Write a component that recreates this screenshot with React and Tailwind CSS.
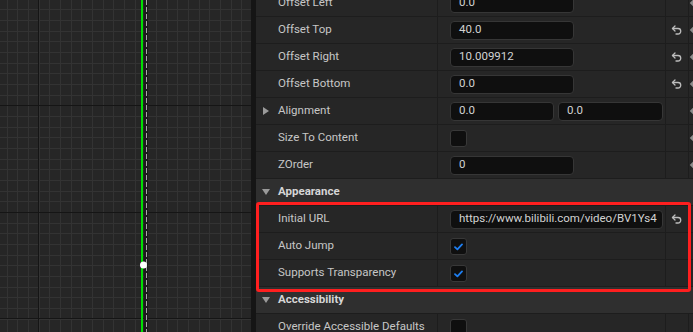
import React from 'react';

const font = { fontFamily: 'Roboto, "Noto Sans", sans-serif' };

// viewport grid lines, snapped to whole pixels
const minorX = [];
const minorY = [];
for (let i = 0; i < 30; i++) {
  minorX.push(Math.round(6.67 + i * 10.667));
  minorY.push(Math.round(9.33 + i * 10.667));
}
const majorX = [38, 145];
const majorY = [105, 212, 318];

const Viewport = () => (
  <div className="w-[251px] h-full shrink-0 bg-[#262626]">
    <svg width="251" height="332" className="block">
      {minorX.map((x) => (
        <rect key={'vx' + x} x={x} y="0" width="1" height="332" fill="#333333" />
      ))}
      {minorY.map((y) => (
        <rect key={'hy' + y} x="0" y={y} width="251" height="1" fill="#333333" />
      ))}
      {majorX.map((x) => (
        <rect key={'mx' + x} x={x} y="0" width="1" height="332" fill="#151515" />
      ))}
      {majorY.map((y) => (
        <rect key={'my' + y} x="0" y={y} width="251" height="1" fill="#151515" />
      ))}
      <rect x="144" y="0" width="4" height="332" fill="#1b1b1b" />
      <line x1="146.5" y1="0" x2="146.5" y2="332" stroke="#a8a8a8" strokeWidth="1" strokeDasharray="5 2" />
      <rect x="141" y="0" width="2" height="332" fill="#00e000" />
      <circle cx="143.5" cy="265" r="3.5" fill="#ffffff" />
    </svg>
  </div>
);

const ResetIcon = () => (
  <svg width="12" height="11" viewBox="0 0 24 22" fill="none" stroke="#bdbdbd" strokeWidth="2.6" strokeLinecap="round" strokeLinejoin="round">
    <path d="M8 12 3 7l5-5" />
    <path d="M3 7h11a5.5 5.5 0 0 1 0 11H10" />
  </svg>
);

const Check = ({ checked }) => (
  <div className="w-[17px] h-[17px] rounded-[3px] bg-[#0f0f0f] border border-[#383838] flex items-center justify-center">
    {checked && (
      <svg width="9" height="8" viewBox="0 0 9 8" className="mt-[1px]">
        <path d="M1 4.2 3.4 6.4 8 1.4" fill="none" stroke="#1e7ef0" strokeWidth="1.8" strokeLinecap="round" strokeLinejoin="round" />
      </svg>
    )}
  </div>
);

const Input = ({ value, w = 'w-[124px]' }) => (
  <div className={`${w} h-[19px] rounded-[4px] bg-[#0f0f0f] border border-[#363636] pl-2 flex items-center overflow-hidden whitespace-nowrap text-[11.5px] text-[#d2d2d2]`}>
    {value}
  </div>
);

const Row = ({ label, arrow, reset, key_, children }) => (
  <div className="flex h-[27px] border-b border-[#1d1d1d] bg-[#262626]">
    <div className="w-[182px] shrink-0 border-r border-[#1d1d1d] flex items-center relative pl-[22px]">
      {arrow && (
        <span className="absolute left-[7px] top-1/2 -translate-y-1/2 w-0 h-0 border-y-[4.5px] border-y-transparent border-l-[6px] border-l-[#9a9a9a]"></span>
      )}
      <span className="text-[11.5px] text-[#c6c6c6] whitespace-nowrap">{label}</span>
    </div>
    <div className="w-[228px] shrink-0 border-r border-[#1d1d1d] flex items-center pl-[12px] gap-[4px]">
      {children}
    </div>
    <div className="w-[23px] shrink-0 border-r border-[#1d1d1d] flex items-center justify-center">
      {reset && <ResetIcon />}
    </div>
    <div className="flex-1 flex items-center overflow-hidden">
      {key_ && <span className="ml-[2px] w-[6px] h-[6px] rotate-45 bg-[#8c8c8c] shrink-0"></span>}
    </div>
  </div>
);

const Header = ({ title }) => (
  <div className="flex items-center h-[27px] border-b border-[#1d1d1d] bg-[#2f2f2f] relative pl-[22px]">
    <span className="absolute left-[6px] top-1/2 -translate-y-1/2 w-0 h-0 border-x-[4.5px] border-x-transparent border-t-[6px] border-t-[#9a9a9a]"></span>
    <span className="text-[11.5px] font-bold text-[#d6d6d6]">{title}</span>
  </div>
);

const DetailsPanel = () => (
  <div className="relative flex-1 h-full overflow-hidden bg-[#262626]">
    <div className="mt-[-10px]">
      <Row label="Offset Left" key_>
        <Input value="0.0" />
      </Row>
      <Row label="Offset Top" reset key_>
        <Input value="40.0" />
      </Row>
      <Row label="Offset Right" reset key_>
        <Input value="10.009912" />
      </Row>
      <Row label="Offset Bottom" reset key_>
        <Input value="0.0" />
      </Row>
      <Row label="Alignment" arrow key_>
        <Input value="0.0" w="w-[104px]" />
        <Input value="0.0" w="w-[105px]" />
      </Row>
      <Row label="Size To Content" key_>
        <Check />
      </Row>
      <Row label="ZOrder" key_>
        <Input value="0" />
      </Row>
      <Header title="Appearance" />
      <Row label="Initial URL" reset>
        <Input value="https://www.bilibili.com/video/BV1Ys4" w="w-[213px]" />
      </Row>
      <Row label="Auto Jump">
        <Check checked />
      </Row>
      <Row label="Supports Transparency">
        <Check checked />
      </Row>
      <Header title="Accessibility" />
      <Row label="Override Accessible Defaults">
        <Check />
      </Row>
    </div>

    {/* highlight box */}
    <div className="absolute left-0 top-[202px] w-[435px] h-[90px] border-[3px] border-[#ff1f1f] rounded-[3px] pointer-events-none"></div>
  </div>
);

export default function App() {
  return (
    <div className="flex w-[693px] h-[332px] overflow-hidden bg-[#151515]" style={font}>
      <Viewport />
      <div className="w-[5px] shrink-0 bg-[#151515]"></div>
      <DetailsPanel />
    </div>
  );
}
